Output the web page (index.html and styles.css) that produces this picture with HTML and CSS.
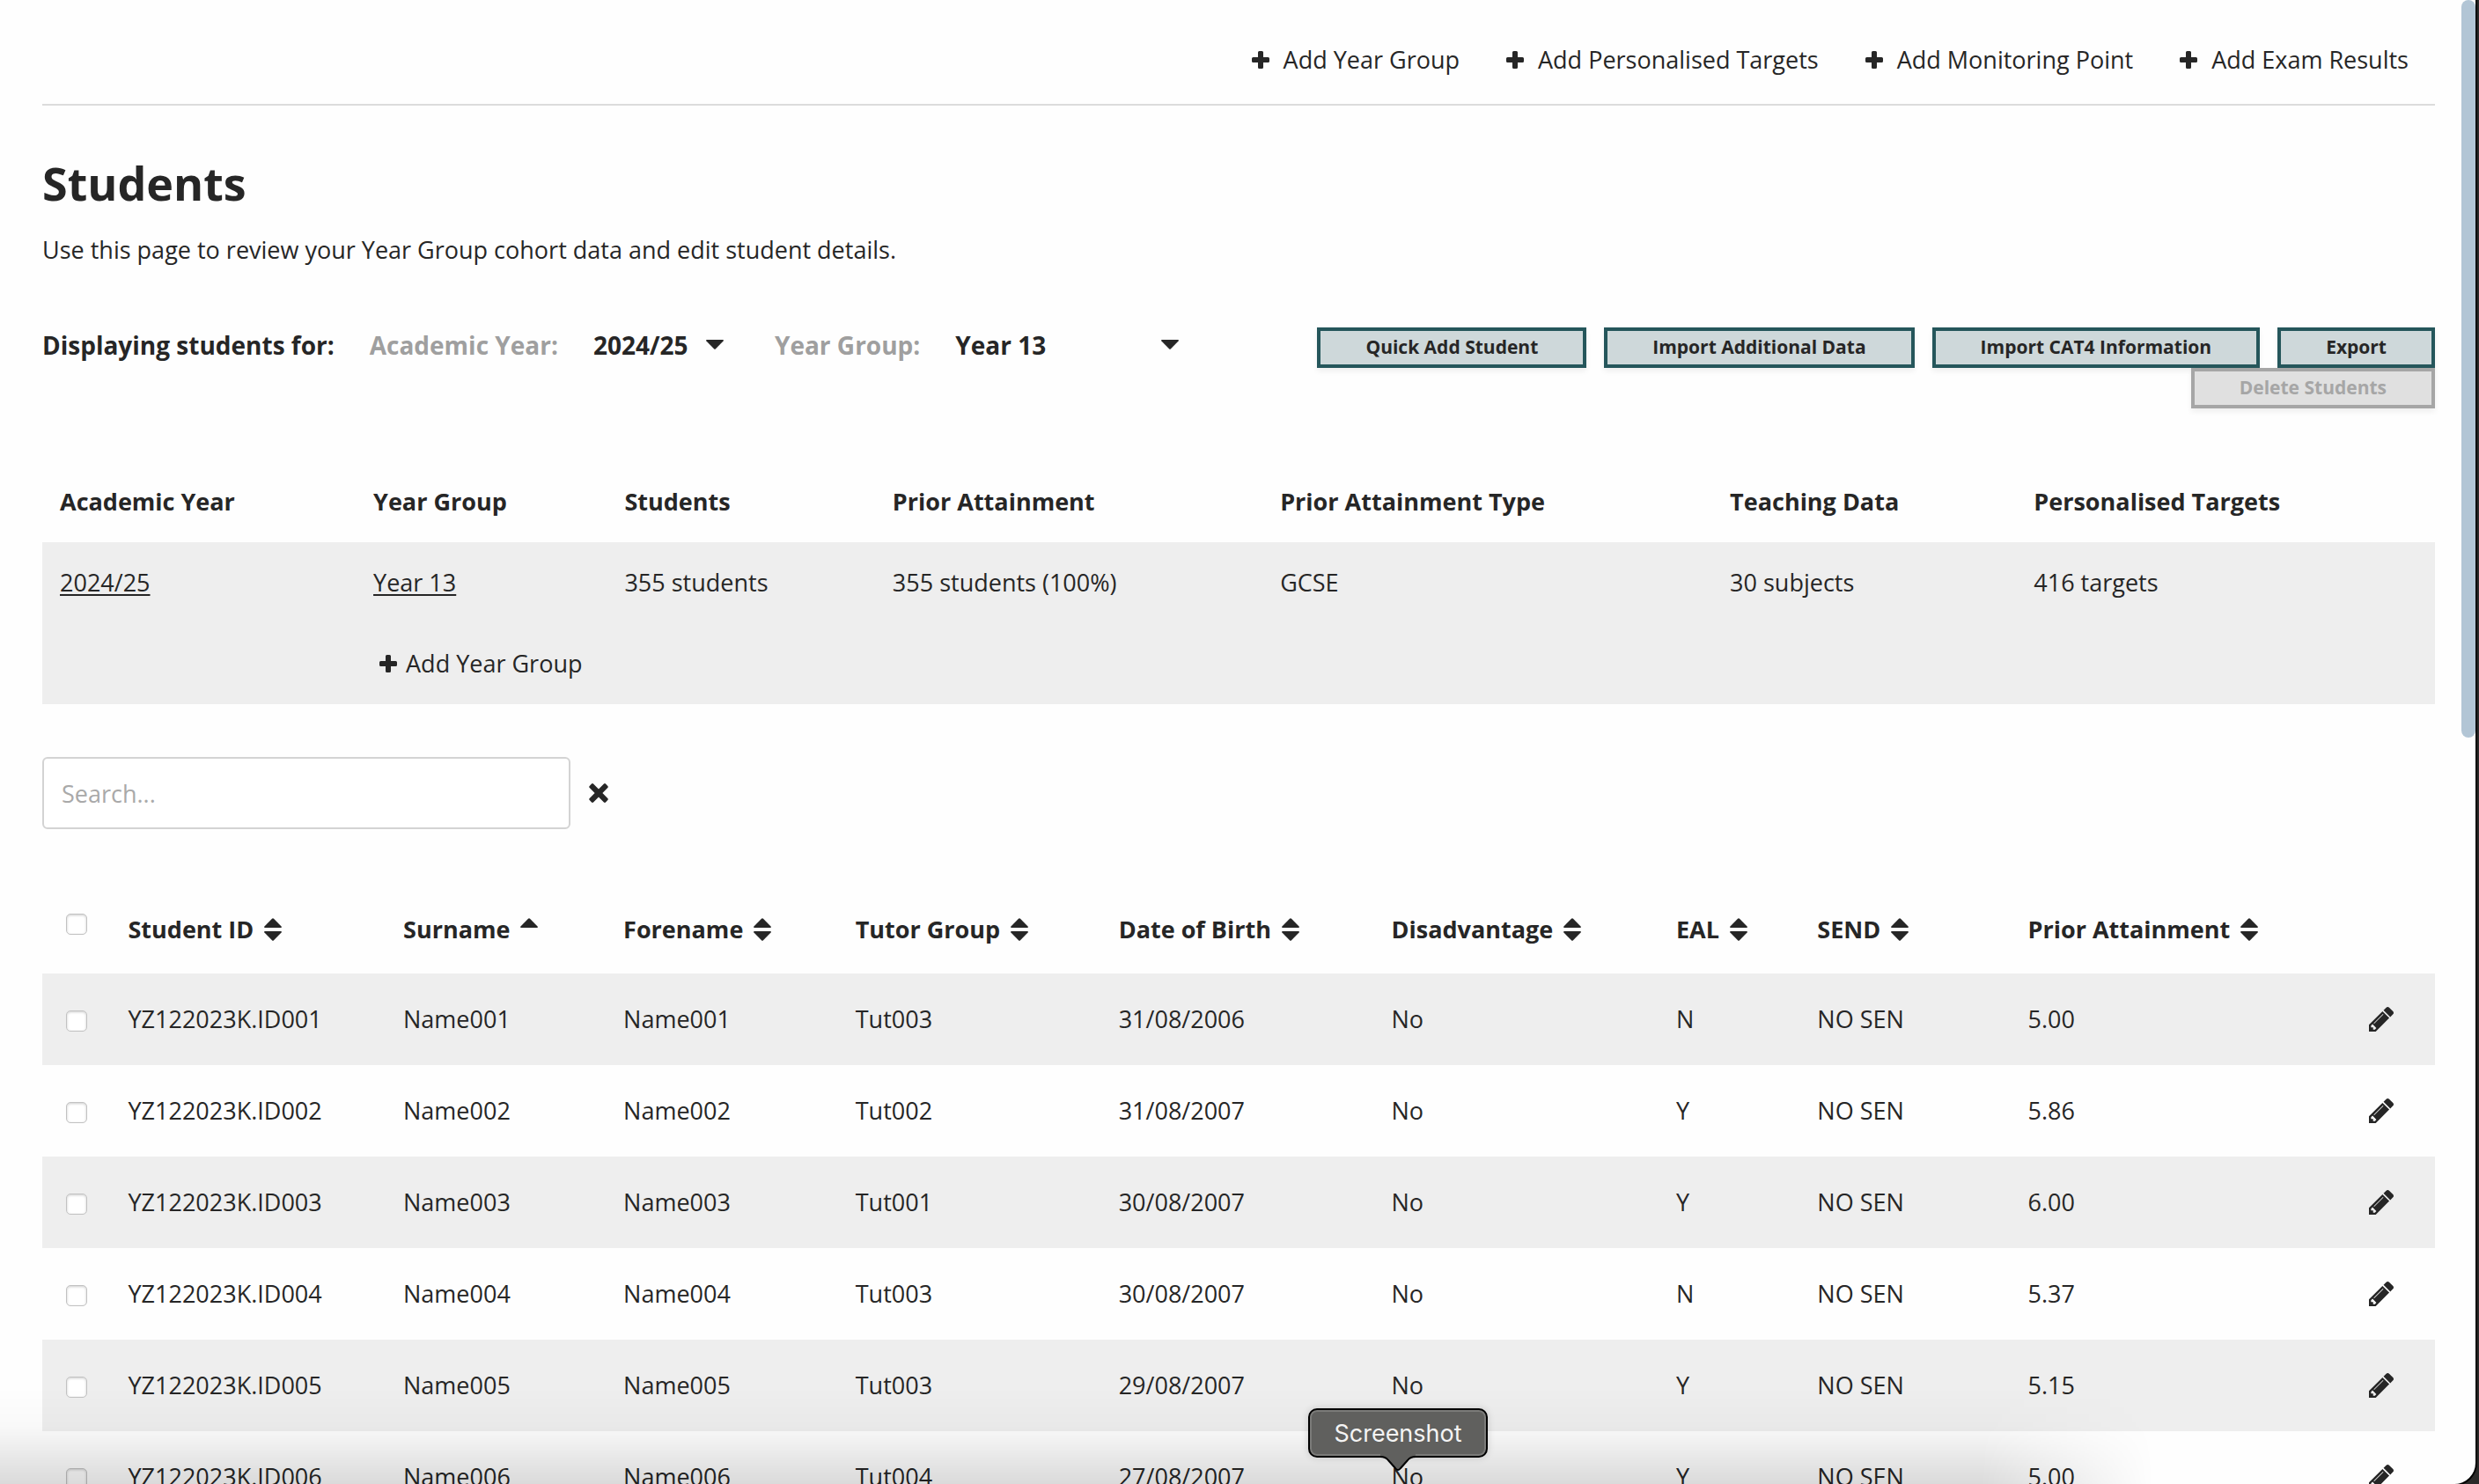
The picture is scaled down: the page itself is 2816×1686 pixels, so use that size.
FILE: index.html
```html
<!DOCTYPE html>
<html lang="en">
<head>
    <meta charset="UTF-8">
    <meta name="viewport" content="width=device-width, initial-scale=1.0">
    <title>Students</title>
    <link rel="stylesheet" href="styles.css">
</head>
<body>
    <!-- Icon shapes shared by the page -->
    <svg class="sprite" aria-hidden="true">
        <symbol id="icon-plus" viewBox="0 0 20 20">
            <path d="M8.500 0h3Q13 0 13 1.500V7h5.500Q20 7 20 8.500v3Q20 13 18.500 13H13v5.500Q13 20 11.500 20h-3Q7 20 7 18.500V13H1.500Q0 13 0 11.500v-3Q0 7 1.500 7H7V1.500Q7 0 8.500 0z"/>
        </symbol>
        <symbol id="icon-close" viewBox="0 0 22 22">
            <path d="M5 0.500q-1-.8-2 0L.7 2.900q-1 1 0 2.100L6.600 11 .7 17q-1 1 0 2.100L3 21.500q1 .8 2 0l6-6 6 6q1 .8 2 0l2.300-2.400q1-1 0-2.100L15.400 11l5.900-6q1-1 0-2.100L19 .5q-1-.8-2 0l-6 6z"/>
        </symbol>
        <symbol id="icon-sort" viewBox="0 0 20 26">
            <path d="M1 11h18q1.500-.3.600-1.500L11 .7q-1-1-2 0L.4 9.500Q-.5 10.700 1 11z"/>
            <path d="M1 15h18q1.500.3.600 1.500L11 25.300q-1 1-2 0L.4 16.500Q-.5 15.300 1 15z"/>
        </symbol>
        <symbol id="icon-sort-asc" viewBox="0 0 20 26">
            <path d="M1 11h18q1.500-.3.600-1.500L11 .7q-1-1-2 0L.4 9.500Q-.5 10.700 1 11z"/>
        </symbol>
        <symbol id="icon-caret" viewBox="0 0 20 11">
            <path d="M1 0h18q1.500.3.600 1.500L11 10.300q-1 1-2 0L.4 1.500Q-.5.300 1 0z"/>
        </symbol>
        <symbol id="icon-pencil" viewBox="128 149 1515 1515">
            <path d="M491 1536l91-91-235-235-91 91v107h128v128h107zm523-928q0-22-22-22-10 0-17 7l-542 542q-7 7-7 17 0 22 22 22 10 0 17-7l542-542q7-7 7-17zm-54-192l416 416-832 832h-416v-416zm683 96q0 53-37 90l-166 166-416-416 166-165q36-38 90-38 53 0 91 38l235 234q37 39 37 91z"/>
        </symbol>
    </svg>

    <div class="page">
        <nav class="actions">
            <a href="#"><svg class="plus"><use href="#icon-plus"/></svg>Add Year Group</a>
            <a href="#"><svg class="plus"><use href="#icon-plus"/></svg>Add Personalised Targets</a>
            <a href="#"><svg class="plus"><use href="#icon-plus"/></svg>Add Monitoring Point</a>
            <a href="#"><svg class="plus"><use href="#icon-plus"/></svg>Add Exam Results</a>
        </nav>

        <h1>Students</h1>
        <p class="intro">Use this page to review your Year Group cohort data and edit student details.</p>

        <div class="toolbar">
            <div class="filters">
                <span>Displaying students for:</span>
                <label for="academic-year">Academic Year:</label>
                <div class="select select-year">
                    <select id="academic-year">
                        <option>2024/25</option>
                    </select>
                    <svg class="caret"><use href="#icon-caret"/></svg>
                </div>
                <label for="year-group">Year Group:</label>
                <div class="select select-group">
                    <select id="year-group">
                        <option>Year 13</option>
                    </select>
                    <svg class="caret"><use href="#icon-caret"/></svg>
                </div>
            </div>
            <div class="buttons">
                <button type="button">Quick Add Student</button>
                <button type="button">Import Additional Data</button>
                <button type="button">Import CAT4 Information</button>
                <button type="button">Export</button>
                <button type="button" disabled>Delete Students</button>
            </div>
        </div>

        <table class="summary">
            <colgroup>
                <col class="s-year"><col class="s-group"><col class="s-students"><col class="s-prior">
                <col class="s-type"><col class="s-teaching"><col>
            </colgroup>
            <thead>
                <tr>
                    <th>Academic Year</th>
                    <th>Year Group</th>
                    <th>Students</th>
                    <th>Prior Attainment</th>
                    <th>Prior Attainment Type</th>
                    <th>Teaching Data</th>
                    <th>Personalised Targets</th>
                </tr>
            </thead>
            <tbody>
                <tr>
                    <td><a href="#">2024/25</a></td>
                    <td><a href="#">Year 13</a></td>
                    <td>355 students</td>
                    <td>355 students (100%)</td>
                    <td>GCSE</td>
                    <td>30 subjects</td>
                    <td>416 targets</td>
                </tr>
                <tr>
                    <td></td>
                    <td colspan="6"><a class="add-group" href="#"><svg class="plus"><use href="#icon-plus"/></svg>Add Year Group</a></td>
                </tr>
            </tbody>
        </table>

        <div class="search">
            <input type="text" placeholder="Search..." aria-label="Search">
            <button type="button" aria-label="Clear search"><svg><use href="#icon-close"/></svg></button>
        </div>

        <table class="students">
            <colgroup>
                <col class="c-check"><col class="c-id"><col class="c-surname"><col class="c-forename"><col class="c-tutor">
                <col class="c-dob"><col class="c-dis"><col class="c-eal"><col class="c-send"><col class="c-prior"><col>
            </colgroup>
            <thead>
                <tr>
                    <th><input type="checkbox" aria-label="Select all students"></th>
                    <th>Student ID<svg class="sort"><use href="#icon-sort"/></svg></th>
                    <th>Surname<svg class="sort"><use href="#icon-sort-asc"/></svg></th>
                    <th>Forename<svg class="sort"><use href="#icon-sort"/></svg></th>
                    <th>Tutor Group<svg class="sort"><use href="#icon-sort"/></svg></th>
                    <th>Date of Birth<svg class="sort"><use href="#icon-sort"/></svg></th>
                    <th>Disadvantage<svg class="sort"><use href="#icon-sort"/></svg></th>
                    <th>EAL<svg class="sort"><use href="#icon-sort"/></svg></th>
                    <th>SEND<svg class="sort"><use href="#icon-sort"/></svg></th>
                    <th>Prior Attainment<svg class="sort"><use href="#icon-sort"/></svg></th>
                    <th></th>
                </tr>
            </thead>
            <tbody>
                <tr>
                    <td><input type="checkbox" aria-label="Select YZ122023K.ID001"></td>
                    <td>YZ122023K.ID001</td>
                    <td>Name001</td>
                    <td>Name001</td>
                    <td>Tut003</td>
                    <td>31/08/2006</td>
                    <td>No</td>
                    <td>N</td>
                    <td>NO SEN</td>
                    <td>5.00</td>
                    <td><a href="#" aria-label="Edit student"><svg class="pencil"><use href="#icon-pencil"/></svg></a></td>
                </tr>
                <tr>
                    <td><input type="checkbox" aria-label="Select YZ122023K.ID002"></td>
                    <td>YZ122023K.ID002</td>
                    <td>Name002</td>
                    <td>Name002</td>
                    <td>Tut002</td>
                    <td>31/08/2007</td>
                    <td>No</td>
                    <td>Y</td>
                    <td>NO SEN</td>
                    <td>5.86</td>
                    <td><a href="#" aria-label="Edit student"><svg class="pencil"><use href="#icon-pencil"/></svg></a></td>
                </tr>
                <tr>
                    <td><input type="checkbox" aria-label="Select YZ122023K.ID003"></td>
                    <td>YZ122023K.ID003</td>
                    <td>Name003</td>
                    <td>Name003</td>
                    <td>Tut001</td>
                    <td>30/08/2007</td>
                    <td>No</td>
                    <td>Y</td>
                    <td>NO SEN</td>
                    <td>6.00</td>
                    <td><a href="#" aria-label="Edit student"><svg class="pencil"><use href="#icon-pencil"/></svg></a></td>
                </tr>
                <tr>
                    <td><input type="checkbox" aria-label="Select YZ122023K.ID004"></td>
                    <td>YZ122023K.ID004</td>
                    <td>Name004</td>
                    <td>Name004</td>
                    <td>Tut003</td>
                    <td>30/08/2007</td>
                    <td>No</td>
                    <td>N</td>
                    <td>NO SEN</td>
                    <td>5.37</td>
                    <td><a href="#" aria-label="Edit student"><svg class="pencil"><use href="#icon-pencil"/></svg></a></td>
                </tr>
                <tr>
                    <td><input type="checkbox" aria-label="Select YZ122023K.ID005"></td>
                    <td>YZ122023K.ID005</td>
                    <td>Name005</td>
                    <td>Name005</td>
                    <td>Tut003</td>
                    <td>29/08/2007</td>
                    <td>No</td>
                    <td>Y</td>
                    <td>NO SEN</td>
                    <td>5.15</td>
                    <td><a href="#" aria-label="Edit student"><svg class="pencil"><use href="#icon-pencil"/></svg></a></td>
                </tr>
                <tr>
                    <td><input type="checkbox" aria-label="Select YZ122023K.ID006"></td>
                    <td>YZ122023K.ID006</td>
                    <td>Name006</td>
                    <td>Name006</td>
                    <td>Tut004</td>
                    <td>27/08/2007</td>
                    <td>No</td>
                    <td>Y</td>
                    <td>NO SEN</td>
                    <td>5.00</td>
                    <td><a href="#" aria-label="Edit student"><svg class="pencil"><use href="#icon-pencil"/></svg></a></td>
                </tr>
            </tbody>
        </table>

        <div class="scrollbar"></div>
        <div class="dock-shade"></div>
    </div>

    <div class="tooltip">
        Screenshot
        <svg class="tooltip-arrow" viewBox="0 0 40 20">
            <path class="arrow-fill" d="M0 0V3Q6 3 9 7L17 17Q20 20 23 17L31 7Q34 3 40 3V0z"/>
            <path class="arrow-line" d="M0 3Q6 3 9 7L17 16Q20 20 23 16L31 7Q34 3 40 3"/>
        </svg>
    </div>
</body>
</html>
```
FILE: styles.css
```css
* {
    box-sizing: border-box;
}

body {
    margin: 0;
    height: 100vh;
    overflow: hidden;
    position: relative;
    background: #2b2a29;
    color: #262626;
    font-family: "Open Sans", "Noto Sans", sans-serif;
    font-size: 27px;
    line-height: 40px;
}

svg {
    fill: currentColor;
}

a {
    color: inherit;
}

.sprite {
    display: none;
}

.page {
    position: relative;
    height: 100%;
    overflow: hidden;
    margin-right: 4px;
    padding: 0 46px 0 48px;
    background: #fefefe;
    border-bottom-right-radius: 24px;
    box-shadow: 0 0 0 2px #000;
}

/* Top links */
.actions {
    display: flex;
    justify-content: flex-end;
    gap: 53px;
    padding: 48px 30px 30px;
    border-bottom: 2px solid #dcdcdc;
}

.actions a {
    display: flex;
    align-items: center;
    gap: 16px;
    text-decoration: none;
}

.plus {
    width: 20px;
    height: 20px;
}

h1 {
    margin: 56px 0 24px;
    font-size: 52px;
    line-height: 64px;
}

.intro {
    margin: 0 0 68px;
}

/* Filters and buttons */
.toolbar {
    display: flex;
    justify-content: space-between;
    align-items: flex-start;
    margin-bottom: 60px;
}

.filters {
    display: flex;
    gap: 40px;
    font-size: 28px;
    font-weight: bold;
    white-space: nowrap;
}

.filters label {
    color: #9f9f9f;
}

.select {
    position: relative;
}

.select-year {
    width: 166px;
}

.select-group {
    width: 272px;
}

select {
    appearance: none;
    width: 100%;
    height: 40px;
    padding: 0;
    border: 0;
    background: none;
    color: inherit;
    font: inherit;
}

.caret {
    position: absolute;
    right: 18px;
    top: 14px;
    width: 20px;
    height: 11px;
    pointer-events: none;
}

.buttons {
    display: flex;
    flex-wrap: wrap;
    justify-content: flex-end;
    column-gap: 20px;
    max-width: 1300px;
}

.buttons button {
    height: 46px;
    padding: 0 51px 2px;
    border: 4px solid #25565b;
    background: #ced8da;
    color: #262626;
    font: bold 21px/30px "Open Sans", "Noto Sans", sans-serif;
    box-shadow: 0 4px 6px rgba(0, 0, 0, 0.06);
}

.buttons button:disabled {
    border-color: #a6a6a6;
    background: #e0e0e0;
    color: #a6a6a6;
}

/* Tables */
table {
    width: 100%;
    table-layout: fixed;
    border-collapse: collapse;
}

th,
td {
    padding: 0 20px;
    text-align: left;
    white-space: nowrap;
}

.summary {
    margin-bottom: 60px;
}

.summary tr {
    height: 92px;
}

.summary tbody {
    background: #eee;
}

.s-year { width: 13.1%; }
.s-group { width: 10.5%; }
.s-students { width: 11.2%; }
.s-prior { width: 16.2%; }
.s-type { width: 18.8%; }
.s-teaching { width: 12.7%; }

.summary td a {
    text-underline-offset: 3px;
    text-decoration-thickness: 2px;
}

.summary .add-group {
    display: flex;
    align-items: center;
    gap: 10px;
    padding-left: 7px;
    text-decoration: none;
}

/* Search */
.search {
    display: flex;
    align-items: center;
    gap: 21px;
    margin-bottom: 60px;
}

.search input {
    width: 600px;
    height: 82px;
    padding: 0 20px;
    border: 2px solid #d3d3d3;
    border-radius: 6px;
    background: #fff;
    color: inherit;
    font: inherit;
}

.search input::placeholder {
    color: #a9a9a9;
}

.search button {
    display: flex;
    padding: 0;
    border: 0;
    background: none;
    color: inherit;
}

.search svg {
    width: 22px;
    height: 22px;
}

/* Student list */
.students tr {
    height: 104px;
}

.students th {
    padding-top: 4px;
}

.students tbody tr:nth-child(odd) {
    background: #eee;
}

.students td:first-child,
.students th:first-child {
    padding: 0 0 0 27px;
}

.students td:last-child {
    text-align: center;
}

.c-check { width: 2.85%; }
.c-id { width: 11.5%; }
.c-surname { width: 9.2%; }
.c-forename { width: 9.7%; }
.c-tutor { width: 11%; }
.c-dob { width: 11.4%; }
.c-dis { width: 11.9%; }
.c-eal { width: 5.9%; }
.c-send { width: 8.8%; }
.c-prior { width: 13.3%; }

.sort {
    width: 20px;
    height: 26px;
    margin-left: 12px;
    vertical-align: -3px;
}

.pencil {
    display: block;
    width: 28px;
    height: 28px;
    margin: 0 auto;
}

input[type="checkbox"] {
    appearance: none;
    display: block;
    width: 24px;
    height: 24px;
    margin: 4px 0 0;
    border: 1px solid #c2c2c2;
    border-radius: 5px;
    background: #fff;
    box-shadow: inset 0 1px 3px rgba(0, 0, 0, 0.2);
}

.students thead input {
    margin: 0 0 8px;
}

/* Window overlays */
.scrollbar {
    position: absolute;
    top: 0;
    right: 0;
    width: 16px;
    height: 838px;
    border-radius: 8px;
    background: #b2c5d5;
}

.dock-shade {
    position: absolute;
    left: 0;
    bottom: 0;
    width: 87%;
    height: 110px;
    background: linear-gradient(to bottom, transparent, rgba(0, 0, 0, 0.02) 40%, rgba(0, 0, 0, 0.14));
    mask-image: linear-gradient(to right, #000 92%, transparent);
    pointer-events: none;
}

.tooltip {
    position: absolute;
    left: 1486px;
    bottom: 30px;
    width: 204px;
    height: 56px;
    border: 2px solid #000;
    border-radius: 10px;
    background: #60605e;
    box-shadow: inset 0 0 0 2px #7b7b79, 0 0 8px rgba(0, 0, 0, 0.15);
    color: #f4f4f4;
    font-family: Inter, sans-serif;
    font-size: 27px;
    line-height: 54px;
    text-align: center;
}

.tooltip-arrow {
    position: absolute;
    left: 80px;
    top: 50px;
    width: 40px;
    height: 20px;
}

.arrow-fill {
    fill: #60605e;
}

.arrow-line {
    fill: none;
    stroke: #000;
    stroke-width: 2;
}
```
